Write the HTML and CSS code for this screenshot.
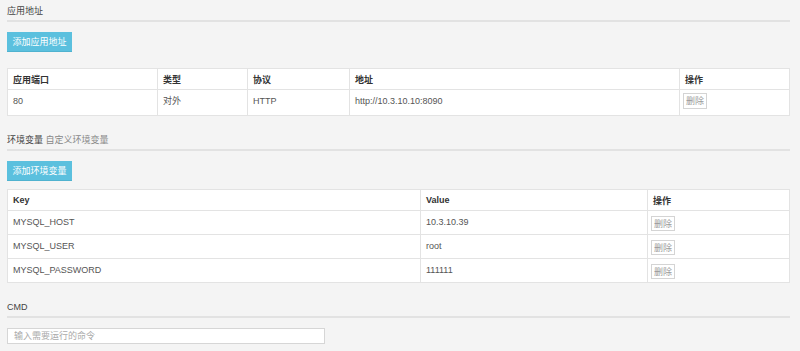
FILE: index.html
```html
<!doctype html>
<html>
    <head>
        <meta charset="utf-8">
        <link rel="stylesheet" href="styles.css">
    </head>
    <body>
        <section class="block">
            <h3 class="block-title">应用地址</h3>
            <button class="btn-add">添加应用地址</button>
            <table class="grid grid-ports">
                <tr class="head">
                    <th class="col-port">应用端口</th>
                    <th class="col-type">类型</th>
                    <th class="col-proto">协议</th>
                    <th class="col-addr">地址</th>
                    <th>操作</th>
                </tr>
                <tr class="row-tall">
                    <td>80</td>
                    <td>对外</td>
                    <td>HTTP</td>
                    <td>http://10.3.10.10:8090</td>
                    <td><button class="btn-del">删除</button></td>
                </tr>
            </table>
        </section>
        <section class="block">
            <h3 class="block-title">环境变量 <span class="sub">自定义环境变量</span></h3>
            <button class="btn-add">添加环境变量</button>
            <table class="grid grid-env">
                <tr class="head">
                    <th class="col-key">Key</th>
                    <th class="col-value">Value</th>
                    <th>操作</th>
                </tr>
                <tr>
                    <td>MYSQL_HOST</td>
                    <td>10.3.10.39</td>
                    <td><button class="btn-del">删除</button></td>
                </tr>
                <tr>
                    <td>MYSQL_USER</td>
                    <td>root</td>
                    <td><button class="btn-del">删除</button></td>
                </tr>
                <tr>
                    <td>MYSQL_PASSWORD</td>
                    <td>111111</td>
                    <td><button class="btn-del">删除</button></td>
                </tr>
            </table>
        </section>
        <section class="block">
            <h3 class="block-title">CMD</h3>
            <input class="cmd" type="text" placeholder="输入需要运行的命令">
        </section>
    </body>
</html>
```

FILE: styles.css
```css
html,
body {
    margin: 0;
    background: #f4f4f4;
}
body {
    padding: 2px 10px 0 7px;
    font-family: "Liberation Sans", "Noto Sans CJK SC", sans-serif;
    font-size: 9px;
    color: #555;
}
.block {
    display: flex;
    flex-direction: column;
    align-items: flex-start;
    margin-bottom: 15px;
}
.block-title {
    align-self: stretch;
    margin: 0 0 10px;
    font-size: 9px;
    font-weight: normal;
    line-height: 18px;
    color: #444;
    border-bottom: 2px solid #e2e2e2;
}
.block-title .sub {
    color: #888;
}
.btn-add {
    height: 20px;
    width: 65px;
    padding: 0;
    border: 0;
    border-bottom: 1px solid #4fb2cf;
    background: #5bc0de;
    color: #fff;
    font-family: inherit;
    font-size: 9px;
}
.grid {
    width: 100%;
    table-layout: fixed;
    border-collapse: collapse;
    background: #fff;
}
.grid-ports {
    margin-top: 16px;
}
.grid-env {
    margin-top: 8px;
}
.grid th,
.grid td {
    box-sizing: border-box;
    border: 1px solid #e3e3e3;
    padding: 0 5px;
    text-align: left;
}
.grid th {
    height: 21px;
    font-weight: bold;
    color: #333;
}
.grid td {
    height: 24px;
    padding-top: 5px;
    vertical-align: top;
    line-height: 12px;
}
.grid td:last-child {
    padding-left: 3px;
    padding-top: 5px;
}
.grid .row-tall td {
    height: 26px;
}
.grid .row-tall td:last-child {
    padding-top: 3px;
}
.col-port {
    width: 150px;
}
.col-type {
    width: 90px;
}
.col-proto {
    width: 102px;
}
.col-addr {
    width: 330px;
}
.col-key {
    width: 413px;
}
.col-value {
    width: 227px;
}
.btn-del {
    height: 15px;
    width: 24px;
    padding: 0;
    border: 1px solid #d4d4d4;
    background: #fff;
    color: #999;
    font-family: inherit;
    font-size: 9px;
    line-height: 12px;
}
.row-tall .btn-del {
    height: 16px;
}
.cmd {
    box-sizing: border-box;
    width: 318px;
    height: 16px;
    margin: 0;
    padding: 0 6px;
    border: 1px solid #d6d6d6;
    background: #fff;
    font-family: inherit;
    font-size: 9px;
    outline: none;
}
.cmd::placeholder {
    color: #aaa;
}
```
